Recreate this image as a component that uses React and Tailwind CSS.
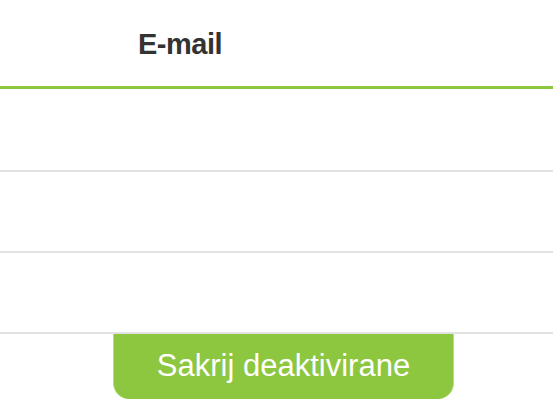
export default function App() {
  return (
    <div className="w-[553px] h-[400px] bg-white overflow-hidden" style={{ fontFamily: '"Liberation Sans", Arial, sans-serif' }}>
      <div className="h-[86px] flex items-center pl-[138px] pt-[2px]">
        <span className="text-[29px] font-bold text-[#333333] leading-none tracking-[-0.5px]">E-mail</span>
      </div>
      <div className="h-[3px] bg-[#8dc63f]" />
      <div className="h-[83px] border-b-2 border-[#e2e2e2]" />
      <div className="h-[81px] border-b-2 border-[#e2e2e2]" />
      <div className="h-[81px] border-b-2 border-[#e2e2e2]" />
      <div className="flex">
        <div className="ml-[113px] w-[341px] h-[65px] bg-[#8dc63f] rounded-b-[16px] border-x border-[#b5dc85] flex items-center justify-center pb-[2px]">
          <span className="text-white text-[31px] leading-none">Sakrij deaktivirane</span>
        </div>
      </div>
    </div>
  );
}
